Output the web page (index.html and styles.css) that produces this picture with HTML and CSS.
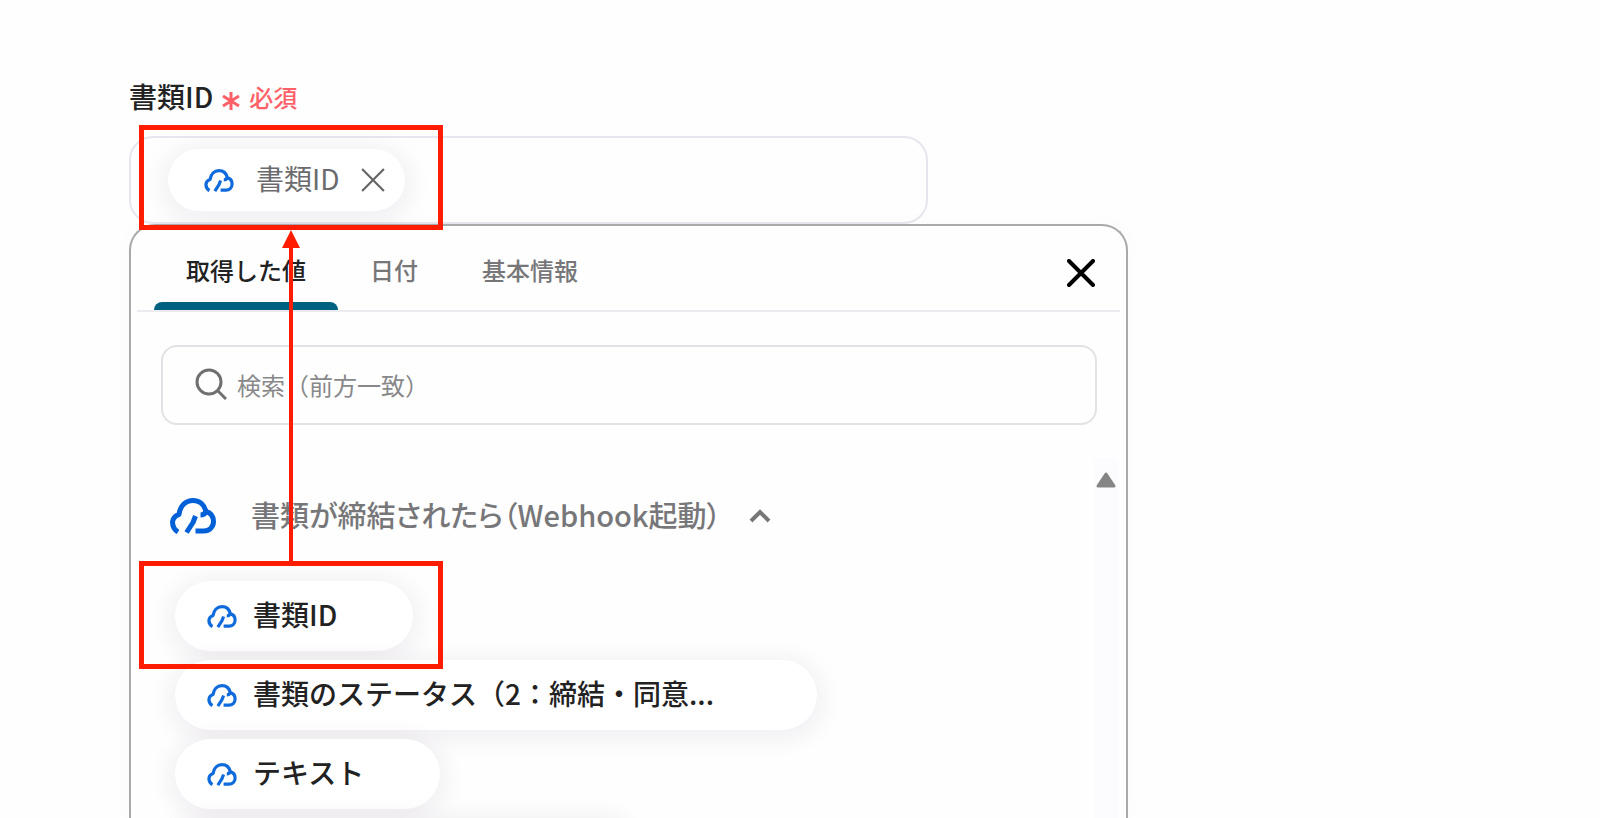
FILE: index.html
```
<!DOCTYPE html>
<html lang="ja">
	<head>
		<meta charset="UTF-8" />
		<meta name="viewport" content="width=device-width, initial-scale=1.0" />
		<title>書類ID</title>
		<link rel="stylesheet" href="styles.css">
	</head>
	<body>
		<svg class="symbols" aria-hidden="true">
			<symbol id="cloud" viewBox="0 0 46 36">
				<g fill="none" stroke="currentColor" stroke-linejoin="round">
					<path d="M8 34C4 31.500 2.500 28 2.500 24C3 20 5.500 17.500 9 16.500C10 8 15.500 2.500 23 2.500C30 2.500 34.500 7 36 13.500C41 15 43.500 19 43.500 23.500C43.500 29.500 39 33 34 33H25.500" />
					<path d="M36 13.500C35 16 33.500 17 30.500 17" />
					<path d="M25.500 18L23 24.500L16.500 34.500" />
				</g>
			</symbol>
		</svg>

		<main class="page">
			<div class="field-title">
				<span class="field-name">書類ID</span>
				<svg class="asterisk" viewBox="0 0 18 20" aria-hidden="true"><path d="M9 1V19M1 5L17 15M17 5L1 15" /></svg>
				<span class="required">必須</span>
			</div>

			<div class="field">
				<div class="tag">
					<svg class="cloud-small"><use href="#cloud" /></svg>
					<span>書類ID</span>
					<button class="icon-button" type="button" aria-label="削除">
						<svg class="remove-icon" viewBox="0 0 22 22"><path d="M1 1L21 21M21 1L1 21" /></svg>
					</button>
				</div>
			</div>

			<section class="panel">
				<div class="tabs">
					<button class="tab active" type="button">取得した値</button>
					<button class="tab" type="button">日付</button>
					<button class="tab" type="button">基本情報</button>
					<button class="icon-button close" type="button" aria-label="閉じる">
						<svg class="close-icon" viewBox="0 0 28 28"><path d="M2 2L26 26M26 2L2 26" /></svg>
					</button>
				</div>

				<label class="search">
					<svg class="search-icon" viewBox="0 0 32 32" aria-hidden="true"><circle cx="14" cy="14" r="12" /><path d="M23 23L31 31" /></svg>
					<input type="text" placeholder="検索（前方一致）" aria-label="検索" />
				</label>

				<div class="results">
					<div class="result-list">
						<button class="group" type="button">
							<svg class="cloud-large"><use href="#cloud" /></svg>
							<span>書類が締結されたら（Webhook起動）</span>
							<svg class="chevron" viewBox="0 0 22 14"><path d="M2 12L11 3L20 12" /></svg>
						</button>
						<button class="chip" type="button"><svg class="cloud-small"><use href="#cloud" /></svg><span>書類ID</span></button>
						<button class="chip wide" type="button"><svg class="cloud-small"><use href="#cloud" /></svg><span>書類のステータス（2：締結・同意...</span></button>
						<button class="chip" type="button"><svg class="cloud-small"><use href="#cloud" /></svg><span>テキスト</span></button>
						<button class="chip medium" type="button"></button>
					</div>
					<div class="scrollbar">
						<svg class="scroll-up" viewBox="0 0 20 16"><path d="M10 2L18 14H2Z" /></svg>
					</div>
				</div>
			</section>

			<div class="highlight highlight-target"></div>
			<div class="highlight highlight-source"></div>
			<div class="arrow"></div>
		</main>
	</body>
</html>
```
FILE: styles.css
```
* {
	box-sizing: border-box;
}

body {
	margin: 0;
	height: 100vh;
	overflow: hidden;
	background-color: #fefefe;
	color: #222;
	font-family: "Noto Sans CJK JP", sans-serif;
	font-size: 28px;
	font-weight: 500;
	line-height: 40px;
}

button {
	border: none;
	padding: 0;
	background: none;
	color: inherit;
	font: inherit;
	cursor: pointer;
}

svg {
	display: block;
	flex: none;
}

.symbols {
	position: absolute;
	width: 0;
	height: 0;
}

.page {
	position: relative;
	display: flex;
	flex-direction: column;
	height: 100%;
	padding: 76px 472px 0 129px;
}

.field-title {
	display: flex;
	align-items: center;
	gap: 8px;
	height: 40px;
	margin-bottom: 20px;
}

.asterisk {
	width: 20px;
	height: 20px;
	margin-top: 9px;
	stroke: #ff6067;
	stroke-width: 3;
}

.required {
	margin-top: 2px;
	color: #ff6067;
	font-size: 24px;
}

.field {
	display: flex;
	flex: none;
	align-items: center;
	width: 80%;
	height: 88px;
	padding-left: 37px;
	border: 2px solid #e6e6ee;
	border-radius: 24px;
}

.tag {
	display: flex;
	align-items: center;
	height: 62px;
	padding: 0 20px 0 36px;
	border-radius: 31px;
	background-color: #fff;
	box-shadow: 0 4px 24px 4px rgba(60, 40, 80, 0.08);
	color: #6b6b6e;
	font-weight: 400;
}

.tag span {
	margin: 0 22px;
	padding-bottom: 4px;
}

.cloud-small {
	width: 30px;
	height: 23px;
	color: #0f6bdc;
	stroke-width: 5;
}

.cloud-large {
	width: 46px;
	height: 36px;
	color: #0060d8;
	stroke-width: 5;
}

.remove-icon {
	width: 24px;
	height: 24px;
	stroke: #666;
	stroke-width: 2;
}

.panel {
	display: flex;
	flex: 1;
	flex-direction: column;
	min-height: 0;
	border: 2px solid #a9a9ab;
	border-bottom: none;
	border-radius: 26px 26px 0 0;
	background-color: #fefefe;
	box-shadow: 0 0 24px rgba(60, 40, 80, 0.02);
}

.tabs {
	display: flex;
	flex: none;
	height: 86px;
	margin: 0 6px;
	padding: 0 25px 0 17px;
	border-bottom: 2px solid #ececf0;
}

.tab {
	position: relative;
	padding: 4px 32px 0;
	color: #77777a;
	font-size: 24px;
}

.tab.active {
	color: #222;
}

.tab.active::after {
	content: "";
	position: absolute;
	bottom: 0;
	left: 0;
	width: 100%;
	height: 8px;
	border-radius: 8px 8px 0 0;
	background-color: #00607f;
}

.close {
	margin-left: auto;
}

.close-icon {
	width: 28px;
	height: 28px;
	margin-top: 10px;
	stroke: #000;
	stroke-width: 4;
	stroke-linecap: round;
}

.search {
	display: flex;
	flex: none;
	align-items: center;
	gap: 10px;
	height: 80px;
	margin: 33px 29px 0 30px;
	padding: 0 32px 2px;
	border: 2px solid #e2e1e5;
	border-radius: 16px;
}

.search-icon {
	width: 32px;
	height: 32px;
	fill: none;
	stroke: #6f6f71;
	stroke-width: 3;
}

.search input {
	flex: 1;
	min-width: 0;
	border: none;
	outline: none;
	padding: 2px 0 0;
	background: none;
	font: inherit;
	font-size: 24px;
	font-weight: 400;
}

.search input::placeholder {
	color: #88888a;
	opacity: 1;
}

.results {
	display: flex;
	flex: 1;
	min-height: 0;
	margin-top: 33px;
	padding-right: 8px;
}

.result-list {
	display: flex;
	flex: 1;
	flex-direction: column;
	align-items: flex-start;
	gap: 9px;
	min-width: 0;
	padding-left: 39px;
	overflow: hidden;
}

.group {
	display: flex;
	flex: none;
	align-items: center;
	height: 40px;
	margin: 38px 0 36px;
	color: #77777a;
	font-size: 29px;
}

.group span {
	margin: 0 28px 0 35px;
	padding-bottom: 4px;
	font-feature-settings: "palt";
}

.chevron {
	width: 22px;
	height: 14px;
	fill: none;
	stroke: #77777a;
	stroke-width: 4;
}

.chip {
	display: flex;
	flex: none;
	align-items: center;
	gap: 16px;
	height: 70px;
	margin-left: 5px;
	padding: 0 76px 0 32px;
	border-radius: 35px;
	background-color: #fff;
	box-shadow: 0 4px 24px 4px rgba(60, 40, 80, 0.08);
}

.chip span {
	padding-bottom: 4px;
}

.chip.wide {
	min-width: 642px;
}

.chip.medium {
	min-width: 460px;
}

.scrollbar {
	display: flex;
	justify-content: center;
	width: 24px;
	padding-top: 14px;
	background-color: #fcfbfe;
}

.scroll-up {
	width: 20px;
	height: 16px;
	fill: #858585;
	stroke: #858585;
	stroke-width: 3;
	stroke-linejoin: round;
}

/* annotation drawn over the form */
.highlight {
	position: absolute;
	left: 139px;
	width: 304px;
	border: 5px solid #ff1c00;
}

.highlight-target {
	top: 125px;
	height: 105px;
}

.highlight-source {
	top: 561px;
	height: 108px;
}

.arrow {
	position: absolute;
	top: 240px;
	left: 289px;
	width: 4px;
	height: 323px;
	background-color: #ff1c00;
}

.arrow::before {
	content: "";
	position: absolute;
	top: -10px;
	left: -7px;
	border: 9px solid transparent;
	border-top: none;
	border-bottom: 18px solid #ff1c00;
}
```
